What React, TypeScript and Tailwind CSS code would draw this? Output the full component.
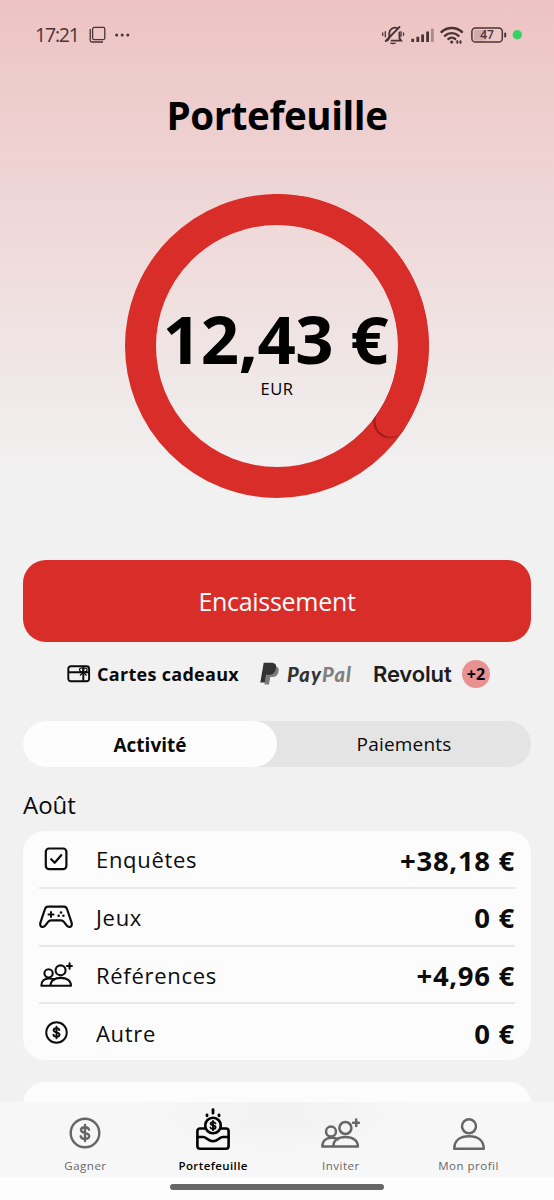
import React from "react";

const sans = "font-['Open_Sans','Noto_Sans',sans-serif]";

function StatusBar() {
  return (
    <div className="flex h-[70px] shrink-0 items-center justify-between pl-[35px] pr-[32px] text-[#4a3236]">
      <div className="flex items-center">
        <span className="w-[44px] whitespace-nowrap text-[19.5px] font-medium leading-none tracking-[-1.2px]">17:21</span>
        <svg className="ml-[10px]" width="18" height="18" viewBox="0 0 18 18" fill="none" stroke="currentColor" strokeWidth="1.3">
          <rect x="3.6" y="1.4" width="12.2" height="12.2" rx="1.5" />
          <path d="M1.2 3v11.2a1.8 1.8 0 0 0 1.8 1.8h11" />
        </svg>
        <svg className="ml-[7px]" width="18" height="4" viewBox="0 0 18 4" fill="currentColor">
          <circle cx="2.6" cy="2" r="1.5" />
          <circle cx="8.2" cy="2" r="1.5" />
          <circle cx="13.8" cy="2" r="1.5" />
        </svg>
      </div>
      <svg width="142" height="24" viewBox="380 23 142 24" fill="none" stroke="currentColor" strokeLinecap="round">
        <path d="M387.5 40.5l1.8-2.6v-5a5.7 5.7 0 0 1 8-4.7M399.4 32.5v5.6l1.8 2.6h-9.6" strokeWidth="1.8" />
        <path d="M385.7 41L399.5 27" strokeWidth="1.8" />
        <path d="M390.8 43.4a3.3 2 0 0 0 4.4 0z" fill="currentColor" strokeWidth="1" />
        <path d="M385.3 31.7v5M382.7 32.8v2.6M401 31.7v4.7M403.5 32.8v2.4" strokeWidth="1.3" />
        <g strokeLinecap="butt" strokeWidth="2.8">
          <path d="M412.7 42v-3.2M417.8 42v-5.2M422.6 42v-7.4M427.6 42v-10.5" />
          <path d="M432.4 42v-13.4" opacity=".4" />
        </g>
        <g strokeWidth="2.4">
          <path d="M441.5 32a15 15 0 0 1 20.5 0" />
          <path d="M444.8 35.8a10.2 10.2 0 0 1 13.8 0" />
          <path d="M448.4 39a5.2 5.2 0 0 1 6.8 0" />
        </g>
        <circle cx="451.7" cy="42" r="1.6" fill="currentColor" stroke="none" />
        <path d="M457.3 40.5v3M460.5 43.5v-3" strokeWidth="1.2" />
        <path d="M456 42.2l1.3-2 1.3 2zM459.2 41.8l1.3 2 1.3-2z" fill="currentColor" strokeWidth=".3" />
        <rect x="474" y="30" width="12" height="10.5" fill="currentColor" stroke="none" opacity=".18" />
        <rect x="471.9" y="27.9" width="30.4" height="14.2" rx="3.6" strokeWidth="1.5" />
        <path d="M505.2 33.5v3" strokeWidth="2" />
        <text x="487" y="39.4" textAnchor="middle" fill="currentColor" stroke="none" fontSize="12" fontWeight="600">47</text>
        <circle cx="517.3" cy="34.8" r="4.7" fill="#35d364" stroke="none" />
      </svg>
    </div>
  );
}

function BalanceRing() {
  return (
    <div className="relative mt-[44px] h-[304px] w-[304px] shrink-0 self-center">
      <svg width="304" height="304" viewBox="125 194 304 304" fill="none">
        <defs>
          <clipPath id="band">
            <path clipRule="evenodd" d="M277 194a152 152 0 1 0 0 304a152 152 0 1 0 0-304zM277 225a121 121 0 1 1 0 242a121 121 0 1 1 0-242z" />
          </clipPath>
          <filter id="soft" x="-50%" y="-50%" width="200%" height="200%">
            <feGaussianBlur stdDeviation="1.3" />
          </filter>
        </defs>
        <circle cx="277" cy="346" r="136.5" stroke="#d92d2a" strokeWidth="31" />
        <g clipPath="url(#band)">
          <circle cx="389.6" cy="421.8" r="15.4" fill="#6d0d0c" filter="url(#soft)" />
          <path d="M277 209.5A136.5 136.5 0 0 1 390.8 421.4" stroke="#d92d2a" strokeWidth="31" strokeLinecap="round" />
        </g>
      </svg>
      <div className="absolute inset-0 flex flex-col items-center text-black">
        <span className="mt-[102px] whitespace-nowrap pr-[3px] text-[67px] font-bold leading-[84px] tracking-[-0.4px]">12,43 €</span>
        <span className="mt-[1px] text-[16.5px] leading-[16px] tracking-[0.6px]">EUR</span>
      </div>
    </div>
  );
}

function GiftCard() {
  return (
    <svg width="24" height="18" viewBox="0 0 24 18" fill="none" stroke="#0a0a0a" strokeWidth="1.9">
      <rect x="1.3" y="1.3" width="20.8" height="15" rx="2.5" />
      <path d="M1.3 7.3h20.800M16.3 1.3v15" />
      <path d="M16.3 7.300c-4.500 0-4.700-4.300-2-4.300 1.600 0 2 2 2 4.300zM16.300 7.300c4.500 0 4.700-4.300 2-4.300-1.600 0-2 2-2 4.300zM16.300 7.300l-3.300 3.200M16.300 7.300l3.300 3.200" strokeWidth="1.2" />
    </svg>
  );
}

function PayPalMark() {
  return (
    <svg width="20" height="24" viewBox="0 0 20 24">
      <path d="M8 4.500h7c3.300 0 4.200 2.400 3.500 5.200-1 4-3.300 5.400-6.800 5.400h-1.500L9 22.500H4.400z" fill="#7b7b7b" />
      <path d="M3.700.8h7.600c4 0 5.500 2.200 4.700 5.700-.9 4.300-3.400 6.300-7.600 6.300H6.200L4.900 20.400H.3z" fill="#333" />
    </svg>
  );
}

function CoinIcon({ className, weight }: { className: string; weight: number }) {
  return (
    <svg className={className} viewBox="0 0 32 32" fill="none" stroke="currentColor" strokeWidth={weight} strokeLinecap="round">
      <circle cx="16" cy="16" r="14.3" />
      <path d="M20 12.700c-.5-1.700-2-2.500-4-2.500-2.300 0-4 1-4 2.800 0 4 8.200 1.900 8.200 6.100 0 1.900-1.900 2.900-4.200 2.900-2.200 0-3.900-1-4.300-2.800M16 8v16" />
    </svg>
  );
}

function FriendsIcon({ className, weight }: { className: string; weight: number }) {
  return (
    <svg className={className} viewBox="0 0 39 30" fill="none" stroke="currentColor" strokeWidth={weight} strokeLinejoin="round" strokeLinecap="round">
      <circle cx="24.400" cy="10" r="6" />
      <circle cx="10" cy="13.600" r="5" />
      <path d="M12.300 28.500c0-6 4.900-9.500 12.200-9.500s12.400 3.500 12.400 9.500zM17 21.300c-1.700-1.200-4-1.600-6.500-1.600-5.600 0-9.200 3.300-9.200 8.800h11" />
      <path d="M35.200 1.600v6.400M32 4.800h6" />
    </svg>
  );
}

function CheckIcon() {
  return (
    <svg width="24" height="24" viewBox="0 0 24 24" fill="none" stroke="currentColor" strokeWidth="2.2" strokeLinecap="round" strokeLinejoin="round">
      <rect x="1.800" y="1.500" width="20.600" height="20.600" rx="3.300" />
      <path d="M7.200 12.200l3.500 3.600 6.500-7.600" />
    </svg>
  );
}

function GamepadIcon() {
  return (
    <svg width="34" height="24" viewBox="0 0 34 24" fill="none" stroke="currentColor" strokeWidth="2.2" strokeLinecap="round" strokeLinejoin="round">
      <path d="M9 1.700C7.400 1.700 6.500 2.600 6 4L1.500 17.300c-.8 2.800.2 4.700 2.100 4.700 1.300 0 2.300-.8 3-1.800l2.500-3.300c.9-1.200 1.700-1.600 3-1.600h9.800c1.300 0 2.100.4 3 1.600l2.500 3.300c.7 1 1.700 1.800 3 1.800 1.900 0 2.900-1.900 2.100-4.700L28 4c-.5-1.400-1.400-2.300-3-2.300z" />
      <path d="M12 7v5M9.500 9.500h5" strokeWidth="2" />
      <g fill="currentColor" stroke="none">
        <circle cx="22" cy="7.500" r="1.300" />
        <circle cx="19.700" cy="10.700" r="1.300" />
        <circle cx="24.400" cy="10.700" r="1.300" />
      </g>
    </svg>
  );
}

function WalletIcon() {
  return (
    <svg width="34" height="42" viewBox="0 0 34 42" fill="none" stroke="currentColor" strokeWidth="2.600" strokeLinecap="round" strokeLinejoin="round">
      <path d="M9 20.500H4a2.600 2.600 0 0 0-2.600 2.600v15a2.600 2.600 0 0 0 2.600 2.600h26a2.600 2.600 0 0 0 2.600-2.600v-15a2.600 2.600 0 0 0-2.600-2.600h-5" />
      <path d="M1.400 29h6c3 0 4 4.200 9.600 4.200s6.600-4.200 9.600-4.200h6" />
      <circle cx="17" cy="17.500" r="7.800" />
      <path d="M19.500 15.500c-.4-.9-1.400-1.300-2.500-1.300-1.400 0-2.400.6-2.400 1.600 0 2.300 5 1 5 3.500 0 1.100-1.200 1.700-2.600 1.700-1.300 0-2.300-.5-2.600-1.500M17 12.900v9.300" strokeWidth="1.800" />
      <path d="M17 1.600v3.600M11 6.800v1M23 6.800v1" strokeWidth="2.800" />
    </svg>
  );
}

function PersonIcon() {
  return (
    <svg width="32" height="32" viewBox="0 0 32 32" fill="none" stroke="currentColor" strokeWidth="2.500" strokeLinejoin="round">
      <circle cx="16" cy="8.300" r="7" />
      <path d="M1.300 30.700c0-8 5.600-12.400 14.700-12.400s14.700 4.400 14.700 12.400z" />
    </svg>
  );
}

const rows = [
  { icon: <CheckIcon />, label: "Enquêtes", value: "+38,18 €" },
  { icon: <GamepadIcon />, label: "Jeux", value: "0 €" },
  { icon: <FriendsIcon className="h-[25px] w-[33px]" weight={2.5} />, label: "Références", value: "+4,96 €" },
  { icon: <CoinIcon className="h-[23px] w-[23px]" weight={2.7} />, label: "Autre", value: "0 €" },
];

function ActivityCard() {
  return (
    <div className="mx-[23px] mt-[8px] flex h-[229px] shrink-0 flex-col rounded-[22px] bg-[#fcfcfc] px-[16px]">
      {rows.map((row, i) => (
        <div key={row.label} className={"flex flex-1 items-center text-[#0c0c0c] " + (i < 3 ? "border-b-2 border-[#e8e8e8]" : "")}>
          <span className="flex w-[34px] justify-center">{row.icon}</span>
          <span className="ml-[23px] flex-1 pt-[1px] text-[22px] leading-none tracking-[0.7px]">{row.label}</span>
          <span className="pt-[3px] text-[27.5px] font-bold leading-none tracking-[0.7px]">{row.value}</span>
        </div>
      ))}
    </div>
  );
}

function NavItem({ icon, label, active }: { icon: React.ReactNode; label: string; active?: boolean }) {
  return (
    <div className={"flex w-[127.7px] flex-col items-center " + (active ? "text-black" : "text-[#666]")}>
      <div className="flex h-[48px] items-end">{icon}</div>
      <span className={"mt-[9px] whitespace-nowrap text-[11.5px] leading-[14px] " + (active ? "font-semibold tracking-[0.4px]" : "font-medium tracking-[0.5px]")}>{label}</span>
    </div>
  );
}

export default function App() {
  return (
    <div className={"relative flex h-[1200px] w-[554px] flex-col overflow-hidden bg-[#f1f1f1] bg-[linear-gradient(to_bottom,#edc3c3_0px,#f1f1f1_480px)] " + sans}>
      <StatusBar />
      <h1 className="mt-[20px] shrink-0 text-center text-[38.5px] font-bold leading-[50px] tracking-[-0.4px] text-black">Portefeuille</h1>
      <div className="mt-[10px] flex shrink-0 flex-col">
        <BalanceRing />
      </div>
      <button className="mx-[23px] mt-[62px] flex h-[82px] shrink-0 items-center justify-center rounded-[23px] bg-[#d92d2a] text-[25px] text-white">
        <span className="pt-[1px] font-medium leading-none tracking-[-0.3px]">Encaissement</span>
      </button>
      <div className="mt-[17px] flex h-[30px] shrink-0 items-center pl-[67px]">
        <GiftCard />
        <span className="ml-[6px] w-[142px] whitespace-nowrap text-[18px] font-bold leading-none tracking-[0.3px] text-[#0a0a0a]">Cartes cadeaux</span>
        <span className="ml-[21px] flex">
          <PayPalMark />
        </span>
        <span className="ml-[7px] w-[66px] whitespace-nowrap font-['Lato',sans-serif] text-[20px] font-black italic leading-none tracking-[1.200px] text-[#333]">
          Pay<span className="text-[#808080]">Pal</span>
        </span>
        <span className="ml-[20px] w-[79px] whitespace-nowrap font-['Inter',sans-serif] text-[22px] font-semibold leading-none tracking-[-0.15px] text-[#1d1d1d]">Revolut</span>
        <span className="ml-[10px] flex h-[28px] w-[28px] items-center justify-center rounded-full bg-[#e89190] pb-[1px] text-[16px] font-bold leading-none text-black">+2</span>
      </div>
      <div className="mx-[23px] mt-[32px] flex h-[46px] shrink-0 rounded-full bg-[#e4e4e4] text-[19px] leading-none text-[#0a0a0a]">
        <div className="flex w-1/2 items-center justify-center rounded-full bg-[#fdfdfd] pt-[2px] font-bold">Activité</div>
        <div className="flex w-1/2 items-center justify-center pt-[1px] tracking-[0.2px]">Paiements</div>
      </div>
      <h2 className="mt-[21px] h-[35px] shrink-0 pl-[23px] text-[24px] leading-[33px] text-[#0a0a0a]">Août</h2>
      <ActivityCard />
      <div className="mx-[23px] mt-[22px] h-[140px] shrink-0 rounded-[22px] bg-[#fcfcfc]" />
      <nav className="absolute inset-x-0 bottom-0 h-[98px] bg-[#fdfdfd]">
        <div className="flex h-[75px] justify-center bg-[radial-gradient(ellipse_150px_40px_at_50%_20%,#f1f1f1,#f7f7f7)]">
          <NavItem icon={<CoinIcon className="mb-[1px] h-[32px] w-[32px]" weight={2.4} />} label="Gagner" />
          <NavItem icon={<WalletIcon />} label="Portefeuille" active />
          <NavItem icon={<FriendsIcon className="mb-[2px] h-[30px] w-[39px]" weight={2.5} />} label="Inviter" />
          <NavItem icon={<PersonIcon />} label="Mon profil" />
        </div>
        <div className="mx-auto mt-[7px] h-[6px] w-[214px] rounded-full bg-[#666]" />
      </nav>
    </div>
  );
}
